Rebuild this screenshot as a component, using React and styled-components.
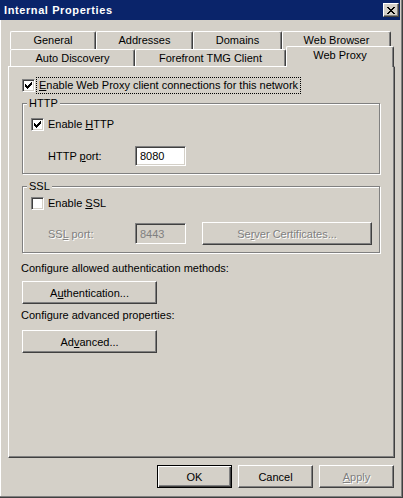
import React from 'react';
import styled, { createGlobalStyle, css } from 'styled-components';

const FACE = '#d4d0c8';
const FONT = '"Liberation Sans", Arial, sans-serif';

const Global = createGlobalStyle`
  html, body { margin: 0; padding: 0; background: ${FACE}; }
  body { font-family: ${FONT}; font-size: 11px; color: #000; }
`;

const Window = styled.div`
  width: 403px;
  height: 498px;
  box-sizing: border-box;
  background: ${FACE};
  display: flex;
  flex-direction: column;
  box-shadow: inset -1px -1px 0 #404040, inset -2px -2px 0 #808080, inset 1px 0 0 #fff;
  font-family: ${FONT};
  font-size: 11px;
  color: #000;
`;

const TitleBar = styled.div`
  height: 20px;
  margin-right: 3px;
  background: #0a246a;
  display: flex;
  align-items: center;
  justify-content: space-between;
  padding: 0 1px 0 4px;
`;

const Title = styled.span`
  color: #fff;
  font-weight: bold;
  font-size: 11px;
  letter-spacing: 0.6px;
`;

const CaptionButton = styled.span`
  width: 16px;
  height: 14px;
  box-sizing: border-box;
  background: ${FACE};
  border-top: 1px solid #fff;
  border-left: 1px solid #fff;
  border-right: 1px solid #404040;
  border-bottom: 1px solid #404040;
  box-shadow: inset -1px -1px 0 #808080;
  display: flex;
  align-items: center;
  justify-content: center;
`;

const Body = styled.div`
  display: flex;
  flex-direction: column;
  padding: 11px 0 0 8px;
`;

const TabStrip = styled.div`
  display: flex;
  flex-direction: column;
  padding-left: 2px;
`;

const TabRow = styled.div`
  display: flex;
  align-items: flex-start;
  height: ${p => p.$h}px;
`;

const Tab = styled.div`
  position: relative;
  box-sizing: border-box;
  flex: none;
  width: ${p => p.$w}px;
  height: ${p => p.$h}px;
  background: ${FACE};
  border-top: 1px solid #fff;
  border-left: 1px solid #fff;
  border-right: 1px solid #404040;
  border-top-left-radius: 2px;
  border-top-right-radius: 2px;
  box-shadow: inset -1px 0 0 #808080;
  display: flex;
  justify-content: center;
  align-items: flex-start;
  line-height: 16px;
  white-space: nowrap;
  ${p => p.$selected && css`
    margin-top: -3px;
    height: ${p.$h + 4}px;
    z-index: 2;
    line-height: 15px;
    padding-top: 1px;
  `}
`;

const Panel = styled.div`
  position: relative;
  z-index: 1;
  box-sizing: border-box;
  width: 387px;
  height: 392px;
  border-top: 1px solid #fff;
  border-left: 1px solid #fff;
  border-right: 1px solid #404040;
  border-bottom: 1px solid #404040;
  box-shadow: inset -1px -1px 0 #808080;
  display: flex;
  flex-direction: column;
  align-items: flex-start;
  padding: 12px 0 0 13px;
`;

const CheckRow = styled.div`
  display: flex;
  align-items: center;
  height: 13px;
`;

const Box = styled.span`
  width: 13px;
  height: 13px;
  box-sizing: border-box;
  flex: none;
  background: #fff;
  border-top: 1px solid #808080;
  border-left: 1px solid #808080;
  border-right: 1px solid #fff;
  border-bottom: 1px solid #fff;
  box-shadow: inset 1px 1px 0 #404040, inset -1px -1px 0 ${FACE};
  display: flex;
  align-items: center;
  justify-content: center;
`;

const Label = styled.span`
  margin-left: 4px;
  line-height: 13px;
  white-space: nowrap;
  ${p => p.$focus && css`
    outline: 1px dotted #000;
    outline-offset: 1px;
    padding: 0 1px;
    margin-left: 3px;
  `}
`;

const Group = styled.fieldset`
  box-sizing: border-box;
  width: 358px;
  margin: ${p => p.$mt}px 0 0 0;
  padding: 0;
  min-inline-size: 0;
  border: 1px solid #808080;
  box-shadow: inset 1px 1px 0 #fff, 1px 1px 0 #fff;
`;

const Legend = styled.legend`
  margin-left: 4px;
  padding: 0 2px;
  line-height: 13px;
  background: ${FACE};
`;

const GroupBody = styled.div`
  display: flex;
  flex-direction: column;
  align-items: flex-start;
  padding: ${p => p.$pt}px 0 7px 8px;
`;

const FieldRow = styled.div`
  display: flex;
  align-items: center;
  margin-top: ${p => p.$mt}px;
  padding-left: 17px;
`;

const FieldLabel = styled.span`
  width: 87px;
  flex: none;
  white-space: nowrap;
  ${p => p.$disabled && css`
    color: #808080;
    text-shadow: 1px 1px 0 #fff;
  `}
`;

const Edit = styled.div`
  box-sizing: border-box;
  width: 51px;
  height: ${p => p.$h}px;
  background: ${p => (p.$disabled ? FACE : '#fff')};
  border-top: 1px solid #808080;
  border-left: 1px solid #808080;
  border-right: 1px solid #fff;
  border-bottom: 1px solid #fff;
  box-shadow: inset 1px 1px 0 #404040, inset -1px -1px 0 ${FACE};
  display: flex;
  align-items: center;
  padding-left: 4px;
  color: ${p => (p.$disabled ? '#808080' : '#000')};
`;

const Button = styled.div`
  box-sizing: border-box;
  flex: none;
  width: ${p => p.$w}px;
  height: ${p => p.$h || 23}px;
  margin-left: ${p => p.$ml || 0}px;
  margin-top: ${p => p.$mt || 0}px;
  background: ${FACE};
  border-top: 1px solid #fff;
  border-left: 1px solid #fff;
  border-right: 1px solid #404040;
  border-bottom: 1px solid #404040;
  box-shadow: inset -1px -1px 0 #808080;
  display: flex;
  align-items: center;
  justify-content: center;
  white-space: nowrap;
  ${p => p.$default && css`
    border: 1px solid #000;
    box-shadow: inset 1px 1px 0 #fff, inset -1px -1px 0 #404040, inset -2px -2px 0 #808080;
  `}
  ${p => p.$disabled && css`
    color: #808080;
    text-shadow: 1px 1px 0 #fff;
  `}
`;

const Caption = styled.div`
  margin-top: ${p => p.$mt}px;
  line-height: 13px;
  margin-left: -1px;
  white-space: nowrap;
`;

const Footer = styled.div`
  display: flex;
  justify-content: flex-end;
  gap: 6px;
  width: 387px;
  box-sizing: border-box;
  padding: 7px 1px 0 0;
`;

const U = styled.u`
  text-decoration: underline;
  text-underline-offset: 1px;
`;

const CheckMark = () => (
  <svg width="7" height="7" viewBox="0 0 7 7" shapeRendering="crispEdges">
    <g fill="#000">
      <rect x="6" y="0" width="1" height="1" />
      <rect x="5" y="1" width="2" height="1" />
      <rect x="0" y="2" width="1" height="1" />
      <rect x="4" y="2" width="3" height="1" />
      <rect x="0" y="3" width="2" height="1" />
      <rect x="3" y="3" width="3" height="1" />
      <rect x="0" y="4" width="5" height="1" />
      <rect x="1" y="5" width="3" height="1" />
      <rect x="2" y="6" width="1" height="1" />
    </g>
  </svg>
);

const CloseGlyph = () => (
  <svg width="8" height="7" viewBox="0 0 8 7" shapeRendering="crispEdges">
    <g fill="#000">
      <rect x="0" y="0" width="2" height="1" />
      <rect x="6" y="0" width="2" height="1" />
      <rect x="1" y="1" width="2" height="1" />
      <rect x="5" y="1" width="2" height="1" />
      <rect x="2" y="2" width="4" height="1" />
      <rect x="3" y="3" width="2" height="1" />
      <rect x="2" y="4" width="4" height="1" />
      <rect x="1" y="5" width="2" height="1" />
      <rect x="5" y="5" width="2" height="1" />
      <rect x="0" y="6" width="2" height="1" />
      <rect x="6" y="6" width="2" height="1" />
    </g>
  </svg>
);

const Check = ({ checked }) => <Box>{checked && <CheckMark />}</Box>;

export default function App() {
  return (
    <>
      <Global />
      <Window>
        <TitleBar>
          <Title>Internal Properties</Title>
          <CaptionButton><CloseGlyph /></CaptionButton>
        </TitleBar>
        <Body>
          <TabStrip>
            <TabRow $h={18}>
              <Tab $w={86} $h={18}>General</Tab>
              <Tab $w={97} $h={18}>Addresses</Tab>
              <Tab $w={89} $h={18}>Domains</Tab>
              <Tab $w={109} $h={18}>Web Browser</Tab>
            </TabRow>
            <TabRow $h={17}>
              <Tab $w={125} $h={17}>Auto Discovery</Tab>
              <Tab $w={151} $h={17}>Forefront TMG Client</Tab>
              <Tab $w={108} $h={17} $selected>Web Proxy</Tab>
            </TabRow>
          </TabStrip>
          <Panel>
            <CheckRow>
              <Check checked />
              <Label $focus><U>E</U>nable Web Proxy client connections for this network</Label>
            </CheckRow>
            <Group $mt={5}>
              <Legend>HTTP</Legend>
              <GroupBody $pt={8}>
                <CheckRow>
                  <Check checked />
                  <Label>Enable <U>H</U>TTP</Label>
                </CheckRow>
                <FieldRow $mt={15}>
                  <FieldLabel>HTTP <U>p</U>ort:</FieldLabel>
                  <Edit $h={20}>8080</Edit>
                </FieldRow>
              </GroupBody>
            </Group>
            <Group $mt={6}>
              <Legend>SSL</Legend>
              <GroupBody $pt={4}>
                <CheckRow>
                  <Check />
                  <Label>Enable <U>S</U>SL</Label>
                </CheckRow>
                <FieldRow $mt={12}>
                  <FieldLabel $disabled>SS<U>L</U> port:</FieldLabel>
                  <Edit $h={21} $disabled>8443</Edit>
                  <Button $w={170} $ml={16} $disabled>Se<U>r</U>ver Certificates...</Button>
                </FieldRow>
              </GroupBody>
            </Group>
            <Caption $mt={9}>Configure allowed authentication methods:</Caption>
            <Button $w={135} $mt={6}>A<U>u</U>thentication...</Button>
            <Caption $mt={5}>Configure advanced properties:</Caption>
            <Button $w={135} $mt={8}>Ad<U>v</U>anced...</Button>
          </Panel>
          <Footer>
            <Button $w={75} $default>OK</Button>
            <Button $w={75}>Cancel</Button>
            <Button $w={75} $disabled><U>A</U>pply</Button>
          </Footer>
        </Body>
      </Window>
    </>
  );
}
